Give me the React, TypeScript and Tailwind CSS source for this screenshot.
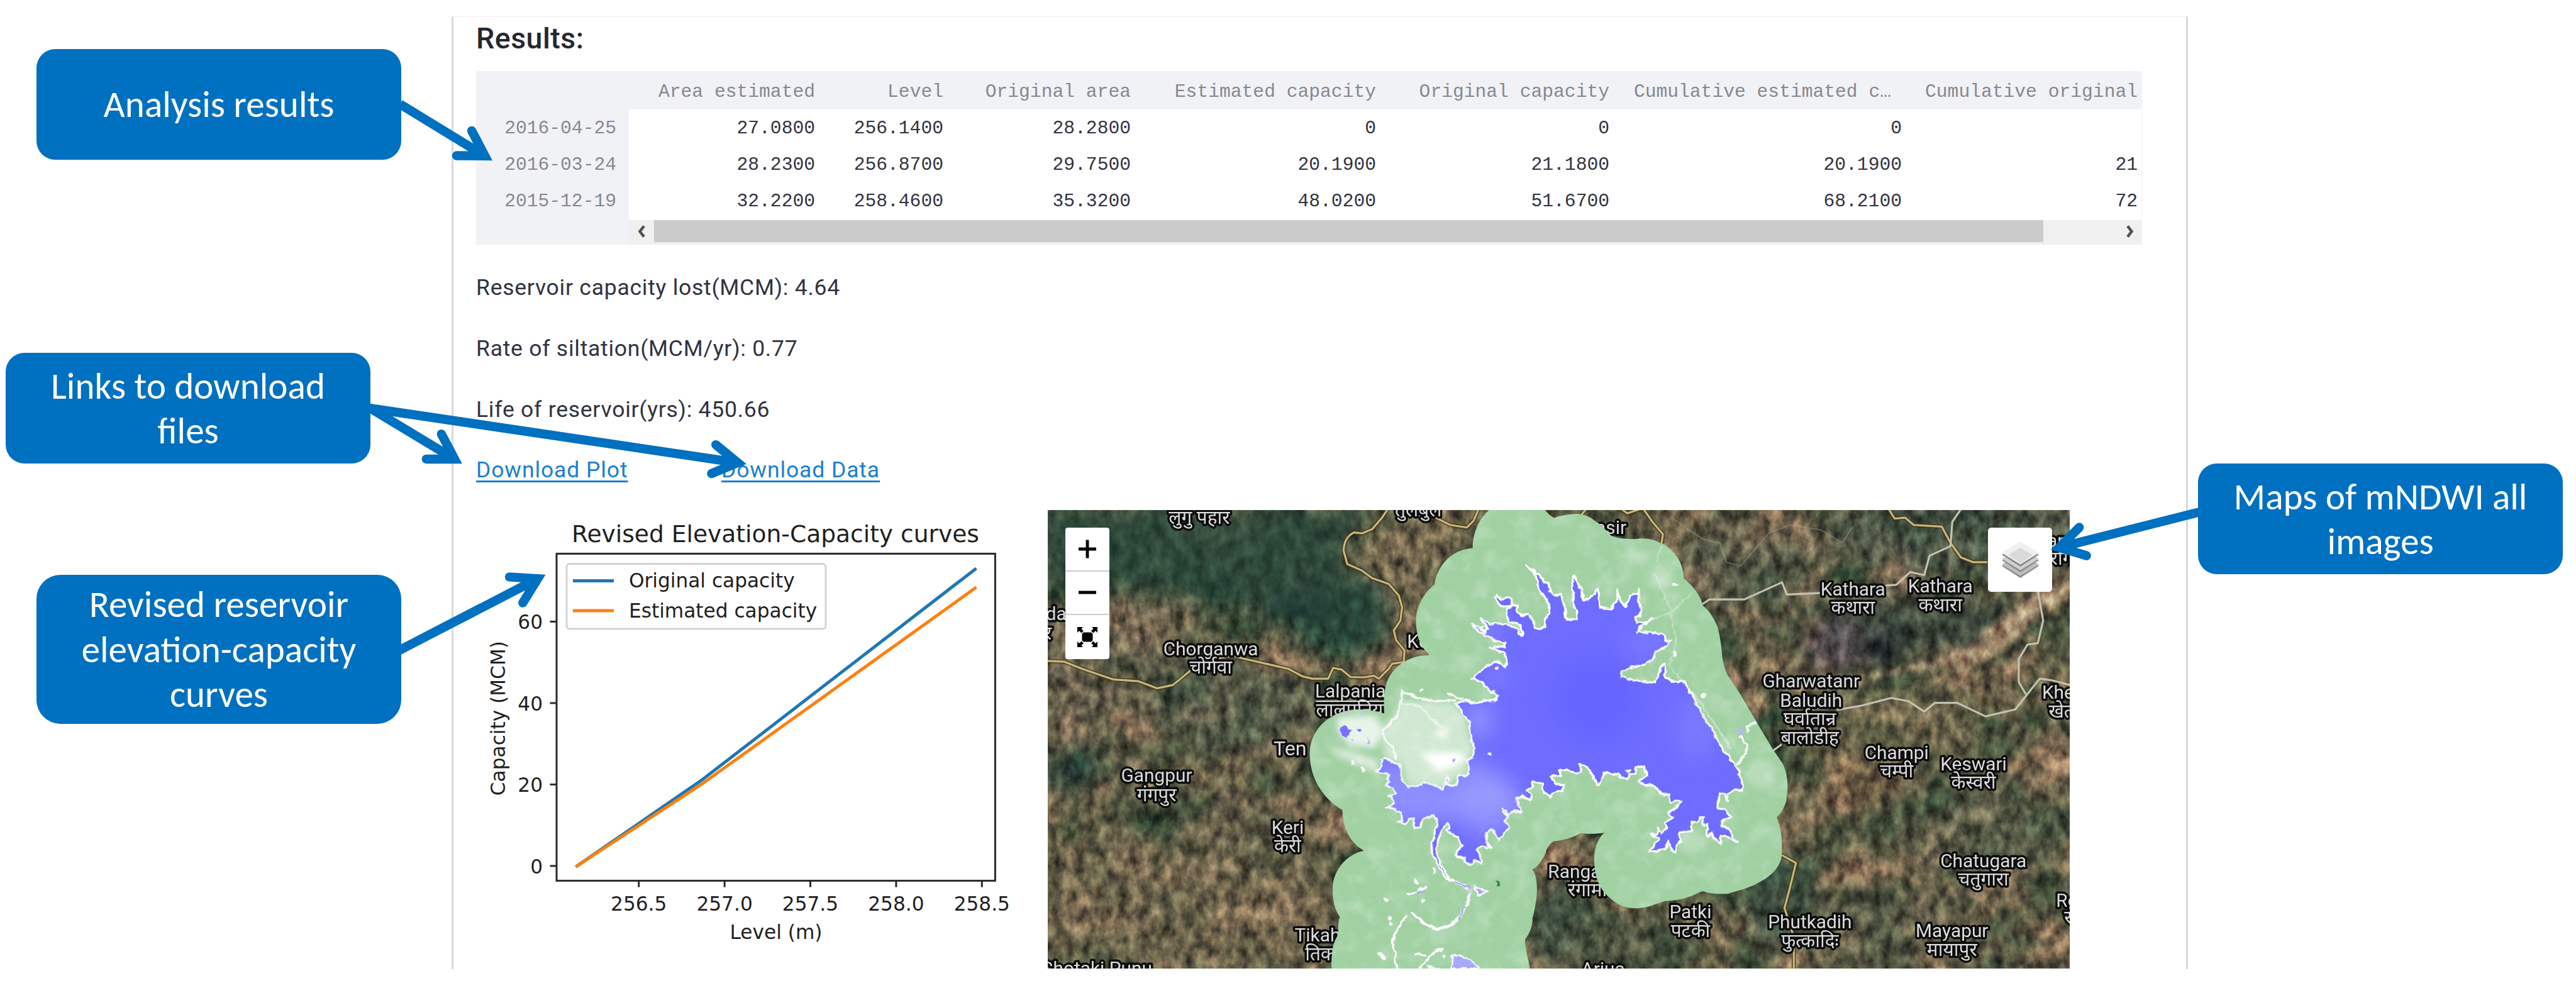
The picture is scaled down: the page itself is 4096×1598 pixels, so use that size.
import type { ReactNode } from "react";

const MONO = "font-['Liberation_Mono',monospace]";
const PLEX = "font-[Roboto,sans-serif]";

/* ---------- Results table ---------- */

const INDEX = ["2016-04-25", "2016-03-24", "2015-12-19"];

const COLUMNS = [
  { title: "Area estimated", cell: "w-[313px] pr-[17px]", values: ["27.0800", "28.2300", "32.2200"] },
  { title: "Level", cell: "w-[204px] pr-[17px]", values: ["256.1400", "256.8700", "258.4600"] },
  { title: "Original area", cell: "w-[298px] pr-[17px]", values: ["28.2800", "29.7500", "35.3200"] },
  { title: "Estimated capacity", cell: "w-[390px] pr-[17px]", values: ["0", "20.1900", "48.0200"] },
  { title: "Original capacity", cell: "w-[371px] pr-[17px]", values: ["0", "21.1800", "51.6700"] },
  { title: "Cumulative estimated c…", cell: "w-[465px] pr-[17px]", values: ["0", "20.1900", "68.2100"] },
  { title: "Cumulative original", cell: "w-[364px] pr-[6px]", values: ["", "21", "72"] },
];

function ResultsTable() {
  return (
    <div className={`mt-[24px] flex h-[276px] w-[2649px] bg-[#f0f2f6] text-[29.65px] leading-[58px] whitespace-pre ${MONO}`}>
      <div className="w-[243px] pt-[62px] pr-[20px] text-right text-[#87888f]">
        {INDEX.map((d) => (
          <div key={d} className="h-[58px]">{d}</div>
        ))}
      </div>
      <div className="flex w-[2406px] flex-col">
        <div className="flex grow">
          {COLUMNS.map((c) => (
            <div key={c.title} className="flex flex-col">
              <div className={`h-[61px] pt-[4px] text-right text-[#87888f] ${c.cell}`}>
                {c.title.endsWith("…") ? <span className="mr-[17px]">{c.title}</span> : c.title}
              </div>
              <div className={`grow bg-white pt-px text-right text-[#31333f] ${c.cell}`}>
                {c.values.map((v, i) => (
                  <div key={i} className="h-[58px]">{v}</div>
                ))}
              </div>
            </div>
          ))}
        </div>
        <div className="flex h-[39px] bg-[#f0f0f0]">
          <div className="flex h-[35px] w-[40px] items-center justify-center">
            <svg className="h-[20px] w-[12px]" viewBox="0 0 12 20"><path d="M10 1.5L3.5 10L10 18.5" fill="none" stroke="#505050" strokeWidth="4.5" /></svg>
          </div>
          <div className="h-[35px] w-[2209px] bg-[#cbcbcb]" />
          <div className="flex h-[35px] w-[157px] items-center justify-end pr-[13px]">
            <svg className="h-[20px] w-[12px]" viewBox="0 0 12 20"><path d="M2 1.5L8.5 10L2 18.5" fill="none" stroke="#505050" strokeWidth="4.5" /></svg>
          </div>
        </div>
      </div>
    </div>
  );
}

/* ---------- Elevation-capacity chart ---------- */

function Chart() {
  const px = (v: number) => 1015.7 + (v - 256.5) * 272.8;
  const py = (v: number) => 1378.3 - v * 6.475;
  const line = (pts: number[][]) => pts.map(([a, b]) => `${px(a)},${py(b)}`).join(" ");
  return (
    <svg className="h-[728px] w-[909px] shrink-0" viewBox="757 812.4 909 728" fontFamily="'DejaVu Sans', sans-serif" fontSize="31.2" fill="#1f1f1f">
      <text x="1233" y="863.5" textAnchor="middle" fontSize="37.6">Revised Elevation-Capacity curves</text>
      <polyline points={line([[256.14, 0], [256.87, 21.18], [258.46, 72.85]])} fill="none" stroke="#1f77b4" strokeWidth="5" strokeLinecap="square" />
      <polyline points={line([[256.14, 0], [256.87, 20.19], [258.46, 68.21]])} fill="none" stroke="#ff7f0e" strokeWidth="5" strokeLinecap="square" />
      <rect x="885" y="881.8" width="697.4" height="520" fill="none" stroke="#2b2b2b" strokeWidth="3" />
      {[0, 20, 40, 60].map((v) => (
        <g key={v}>
          <line x1="874.5" x2="885" y1={py(v)} y2={py(v)} stroke="#2b2b2b" strokeWidth="3" />
          <text x="863" y={py(v) + 12} textAnchor="end">{v}</text>
        </g>
      ))}
      {[256.5, 257, 257.5, 258, 258.5].map((v) => (
        <g key={v}>
          <line x1={px(v)} x2={px(v)} y1="1402" y2="1412" stroke="#2b2b2b" strokeWidth="3" />
          <text x={px(v)} y="1449.3" textAnchor="middle">{v.toFixed(1)}</text>
        </g>
      ))}
      <text x="1234" y="1494.5" textAnchor="middle">Level (m)</text>
      <text transform="translate(803.4 1143.5) rotate(-90)" textAnchor="middle">Capacity (MCM)</text>
      <rect x="901" y="898" width="412" height="103.5" rx="5" fill="#fff" stroke="#d3d3d3" strokeWidth="3" />
      <line x1="911" x2="976" y1="924.8" y2="924.8" stroke="#1f77b4" strokeWidth="5" />
      <line x1="911" x2="976" y1="972.3" y2="972.3" stroke="#ff7f0e" strokeWidth="5" />
      <text x="1000" y="935.5">Original capacity</text>
      <text x="1000" y="983.5">Estimated capacity</text>
    </svg>
  );
}

/* ---------- Map ---------- */

type Anchor = "start" | "middle" | "end";
const PLACES: [string, number, number, Anchor, number?][] = [
  ["लुगु पहार", -641, 98, "middle"],
  ["तुलबुल", 678, 52, "middle"],
  ["nda", -1440, 679, "end"],
  ["र", -1530, 796, "end"],
  ["Chorganwa", -572, 891, "middle"],
  ["चोर्गवा", -572, 1000, "middle"],
  ["Lalpania", 56, 1145, "start"],
  ["लालपनिया", 62, 1256, "start"],
  ["Ten", -194, 1491, "start", 122],
  ["Gangpur", -898, 1652, "middle"],
  ["गंगपुर", -898, 1769, "middle"],
  ["Keri", -109, 1964, "middle"],
  ["केरी", -109, 2076, "middle"],
  ["Tikahara", -67, 2614, "start"],
  ["तिकहारा", -4, 2726, "start"],
  ["Chotaki Punu", -925, 2812, "end"],
  ["Ko", 610, 845, "start"],
  ["asir", 1930, 158, "end"],
  ["Rangamati", 1458, 2230, "start"],
  ["रंगामाटी", 1578, 2340, "start"],
  ["Patki", 2316, 2472, "middle"],
  ["पटकी", 2316, 2585, "middle"],
  ["Arjua", 1790, 2815, "middle"],
  ["Kathara", 3294, 530, "middle"],
  ["कथारा", 3294, 640, "middle"],
  ["Kathara", 3820, 512, "middle"],
  ["कथारा", 3820, 625, "middle"],
  ["Gharwatanr", 3042, 1084, "middle"],
  ["Baludih", 3042, 1199, "middle"],
  ["घर्वातान्र", 3034, 1308, "middle"],
  ["बालोडीह", 3034, 1423, "middle"],
  ["Champi", 3557, 1514, "middle"],
  ["चम्पी", 3557, 1623, "middle"],
  ["Keswari", 4020, 1584, "middle"],
  ["केस्वरी", 4020, 1691, "middle"],
  ["Khetko", 4432, 1150, "start"],
  ["खेतको", 4472, 1263, "start"],
  ["Chatugara", 4079, 2166, "middle"],
  ["चतुगारा", 4079, 2275, "middle"],
  ["Phutkadih", 3035, 2532, "middle"],
  ["फुत्कादिः", 3035, 2645, "middle"],
  ["Mayapur", 3890, 2586, "middle"],
  ["मायापुर", 3890, 2699, "middle"],
  ["Ro", 4517, 2403, "start"],
  ["रो", 4566, 2508, "start"],
  ["Jarang", 4650, 240, "end"],
  ["जरंगि", 4620, 345, "end"],
];

const YELLOW_ROADS = [
  "M500 0L460 60L400 130L340 155L290 150Q230 180 228 260L250 340L340 380L400 425L500 460L560 530L580 600L570 680L530 740L545 800L595 860L590 930L520 940L500 970L440 1030L410 1012L350 1022L270 1020L215 975L165 965L135 1030L40 1030L-20 1016L-104 971L-231 942L-357 913L-441 893L-568 913L-694 981L-799 1068L-894 1088L-1010 1045L-1157 1035L-1346 971L-1452 928L-1560 923",
  "M780 60L870 105L970 120L1010 80L1045 0",
  "M1655 50L1695 0M1890 0L1935 35L2010 10M2030 5L2090 90L2150 160L2142 215",
  "M3510 10L3545 66L3608 61L3660 105L3829 115L3881 212L3944 300L4018 329L4102 329",
  "M2866 2092L2951 2139L2913 2295L2882 2411L2938 2586L2938 2775",
];
const WHITE_ROADS = [
  "M3944 10L3892 86L3881 232L3755 290L3723 407L3639 388L3555 465L3490 470M3100 514L2896 524L2867 450L2640 553L2430 553L2387 582",
  "M4407 500L4439 680L4407 816L4344 825L4292 913L4292 1049L4334 1123M3197 1218L3334 1195L3524 1146L3629 1166L3723 1228L3787 1176L3923 1176L4092 1257L4271 1215L4418 1030L4492 1040L4600 1068",
  "M2810 1466L2865 1425",
];

const BUFFER =
  "M1110 10C1050 60 1005 140 1005 245C880 250 790 350 775 465C700 520 655 620 665 710C668 790 700 850 740 880L740 890C600 890 500 980 480 1080C468 1130 470 1190 472 1240C430 1222 370 1215 300 1215C150 1225 30 1330 24 1470C20 1620 100 1750 220 1820C225 1940 270 2020 350 2065C240 2090 160 2190 162 2300C162 2370 175 2420 205 2465C190 2500 200 2560 190 2580C165 2620 155 2660 155 2780L1350 2780C1340 2710 1320 2660 1320 2600C1350 2560 1365 2520 1365 2470C1385 2400 1392 2340 1392 2290C1390 2230 1380 2200 1365 2180C1410 2150 1440 2100 1450 2060C1465 2030 1480 2015 1495 2008C1550 2005 1610 1985 1655 1960C1700 1966 1760 1964 1797 1958C1750 2000 1737 2060 1737 2120C1737 2210 1760 2290 1830 2350C1890 2400 1930 2412 1990 2412C2060 2410 2110 2385 2160 2370C2220 2365 2260 2360 2300 2345C2340 2335 2370 2310 2395 2310C2430 2325 2490 2327 2540 2325C2590 2310 2680 2290 2740 2250C2820 2210 2865 2140 2865 2090C2870 2000 2865 1940 2835 1865C2870 1830 2895 1780 2895 1740C2905 1680 2902 1600 2870 1540C2850 1510 2830 1480 2815 1460L2710 1285L2620 1130L2540 1010C2520 970 2510 930 2505 880C2500 810 2490 760 2480 720C2460 670 2430 620 2390 590C2380 540 2350 490 2275 425C2275 370 2250 310 2230 290C2200 250 2170 225 2140 215C2090 190 2050 180 1980 190C1930 185 1890 190 1840 170C1810 140 1780 100 1740 80C1710 55 1670 38 1630 38C1580 40 1530 50 1495 62C1470 50 1455 30 1435 10Z";

const LAKE =
  "M1330 345L1385 390L1410 410L1440 450L1465 460L1470 500L1500 530L1535 515L1550 570L1560 600L1570 670L1635 675L1630 620L1612 600L1605 480L1610 405L1635 450L1662 490L1670 555L1705 555L1730 520L1758 485L1765 550L1772 600L1840 608L1870 565L1878 495L1890 560L1930 595L1945 545L1965 515L1995 520L2012 490L2000 560L2015 600L2015 650L1985 660L1988 690L2040 690L2090 670L2025 710L1995 748L2070 750L2155 762L2162 800L2200 800L2155 850L2110 860L2100 900L2040 945L1960 965L1900 990L1895 1015L1940 1030L2020 1045L2105 1050L2120 1020L2130 970L2165 940L2160 1020L2220 1050L2268 1042L2330 1130L2400 1270L2450 1340L2510 1455L2580 1540L2605 1590L2630 1650L2628 1700L2580 1702L2545 1720L2535 1765L2523 1720L2485 1725L2490 1760L2475 1780L2485 1815L2525 1820L2565 1860L2505 1890L2510 1920L2545 1935L2570 1980L2600 2015L2530 1980L2495 1980L2500 2025L2460 1990L2440 1960L2415 1980L2420 1910L2390 1910L2395 1865L2375 1865L2360 1890L2330 1890L2320 1950L2275 1945L2245 1960L2255 2000L2230 2040L2225 2080L2200 2060L2185 2010L2160 2055L2065 2075L2130 1990L2080 1970L2115 1965L2120 1930L2140 1960L2175 1925L2155 1895L2210 1870L2180 1835L2215 1820L2260 1770L2240 1760L2190 1780L2185 1730L2150 1730L2120 1700L2080 1670L2040 1670L2000 1645L2055 1615L2035 1555L1985 1560L1990 1600L1945 1610L1940 1635L1905 1630L1880 1605L1790 1600L1770 1670L1750 1665L1715 1595L1685 1550L1650 1548L1655 1585L1630 1602L1580 1580L1530 1585L1535 1615L1475 1618L1500 1660L1550 1670L1545 1705L1490 1720L1475 1740L1435 1720L1420 1690L1430 1660L1370 1650L1355 1690L1330 1700L1360 1730L1350 1760L1300 1735L1270 1750L1275 1800L1300 1835L1260 1830L1220 1845L1185 1815L1185 1835L1220 1860L1200 1890L1225 1930L1190 1960L1165 2000L1145 1975L1118 1930L1090 1960L1085 2010L1115 2055L1060 2040L1030 2060L1050 2100L1060 2140L1020 2125L1000 2145L960 2140L955 2105L905 2100L910 2065L940 2035L915 1990L850 1945L865 1930L850 1900L825 1930L800 1990L785 2050L790 2100L820 2160L865 2235L840 2225L795 2150L768 2105L755 2040L780 1950L795 1880L770 1855L740 1860L700 1885L690 1925L655 1928L650 1870L620 1875L600 1910L555 1885L580 1880L575 1840L530 1810L485 1808L530 1780L520 1740L500 1735L545 1720L520 1690L485 1675L500 1645L490 1620L505 1610L430 1590L460 1550L455 1520L485 1505L520 1535L560 1540L575 1580L580 1640L620 1680L690 1675L710 1650L770 1670L820 1695L850 1625L865 1635L845 1670L910 1670L920 1615L970 1610L985 1580L970 1520L1005 1500L1015 1450L1000 1410L990 1350L985 1290L950 1250L940 1220L895 1180L960 1160L1030 1180L1080 1160L1135 1160L1158 1135L1140 1105L1110 1110L1060 1050L1000 1030L1045 990L1100 950L1130 930L1160 930L1200 960L1212 940L1200 880L1110 840L1195 835L1200 815L1130 800L1080 770L1040 745L1000 700L1035 715L1080 755L1095 730L1050 665L1100 695L1200 700L1240 720L1275 725L1285 760L1305 770L1290 710L1270 695L1225 690L1215 650L1215 610L1240 590L1215 595L1180 595L1160 580L1140 545L1155 530L1175 555L1200 550L1215 535L1240 560L1240 580L1275 590L1270 620L1300 650L1340 640L1370 680L1375 720L1410 735L1440 715L1440 670L1470 635L1465 590L1440 540L1400 480L1385 410Z";

function SatelliteMap() {
  return (
    <div className="relative h-[728.5px] w-[1625px] shrink-0 overflow-hidden">
      <svg className="block h-full w-full" viewBox="-1553 15 6152 2758" preserveAspectRatio="none">
        <defs>
          <filter id="terrain" x="0" y="0" width="1" height="1" colorInterpolationFilters="sRGB">
            <feTurbulence type="fractalNoise" baseFrequency="0.003 0.0035" numOctaves="6" seed="14" />
            <feColorMatrix values="0 0.62 0 0 0.055  0 0.3 0 0 0.2  0 0.26 0 0 0.135  0 0 0 0 1" />
          </filter>
          <filter id="grain" x="0" y="0" width="1" height="1" colorInterpolationFilters="sRGB">
            <feTurbulence type="fractalNoise" baseFrequency="0.015 0.01" numOctaves="4" seed="5" />
            <feColorMatrix values="1.3 0 0 0 -0.13  1.25 0.05 0 0 -0.13  1.2 0.08 0 0 -0.12  0 0 0 0 1" />
          </filter>
          <filter id="mottle" x="0" y="0" width="1" height="1" colorInterpolationFilters="sRGB">
            <feTurbulence type="fractalNoise" baseFrequency="0.008" numOctaves="5" seed="9" />
            <feColorMatrix values="0 0 0 0 1  0 0 0 0 1  0 0 0 0 1  2 0 0 0 -0.9" />
          </filter>
          <filter id="ragged" x="-0.1" y="-0.1" width="1.2" height="1.2">
            <feTurbulence type="fractalNoise" baseFrequency="0.03" numOctaves="2" seed="3" />
            <feDisplacementMap in="SourceGraphic" scale="26" xChannelSelector="R" yChannelSelector="G" />
          </filter>
          <filter id="soft60" x="-0.5" y="-0.5" width="2" height="2" colorInterpolationFilters="sRGB"><feGaussianBlur stdDeviation="60" /></filter>
          <filter id="soft25" x="-0.5" y="-0.5" width="2" height="2" colorInterpolationFilters="sRGB"><feGaussianBlur stdDeviation="20" /></filter>
          <clipPath id="bufferClip"><path d={BUFFER} /></clipPath>
          <clipPath id="lakeClip"><path d={LAKE} /></clipPath>
        </defs>

        <rect x="-1553" y="15" width="6152" height="2758" fill="#55523f" />
        <rect x="-1553" y="15" width="6152" height="2758" filter="url(#terrain)" />
        <g filter="url(#soft60)">
          <path d="M-1600 0L420 0L300 150L200 300L480 500L520 800L300 900L-300 640L-900 520L-1600 520Z" fill="#274435" opacity="0.75" />
          <path d="M-300 560L420 480L480 850L0 850Z" fill="#29473a" opacity="0.7" />
          <path d="M560 60L960 60L980 240L740 480L620 800L560 500L260 300L300 180Z" fill="#75684f" opacity="0.75" />
          <path d="M-1560 620L-800 560L-600 860L-1200 1350L-1560 1400Z" fill="#6e6350" opacity="0.55" />
          <ellipse cx="-450" cy="1200" rx="500" ry="260" fill="#3e4f40" opacity="0.55" />
          <ellipse cx="-1450" cy="1600" rx="200" ry="60" fill="#1b3634" opacity="0.9" />
          <ellipse cx="-1330" cy="1500" rx="130" ry="35" fill="#1f3a38" opacity="0.8" />
          <path d="M-1560 2100L-200 1900L200 2100L150 2780L-1560 2780Z" fill="#73664f" opacity="0.6" />
          <ellipse cx="-400" cy="1900" rx="350" ry="220" fill="#4c4f3f" opacity="0.4" />
          <ellipse cx="1900" cy="2600" rx="500" ry="200" fill="#46523f" opacity="0.5" />
          <ellipse cx="1500" cy="2500" rx="160" ry="260" fill="#33463a" opacity="0.7" />
          <ellipse cx="2850" cy="2350" rx="220" ry="300" fill="#304639" opacity="0.8" />
          <ellipse cx="2650" cy="330" rx="420" ry="260" fill="#55574a" opacity="0.5" />
          <ellipse cx="3900" cy="150" rx="800" ry="220" fill="#3c4d42" opacity="0.6" />
          <ellipse cx="3700" cy="700" rx="620" ry="170" fill="#354238" opacity="0.85" />
          <ellipse cx="3200" cy="830" rx="190" ry="170" fill="#4c474d" opacity="0.9" />
          <ellipse cx="3480" cy="840" rx="120" ry="90" fill="#23282e" opacity="0.9" />
          <ellipse cx="3520" cy="1350" rx="600" ry="260" fill="#626048" opacity="0.6" />
          <ellipse cx="3350" cy="1650" rx="220" ry="160" fill="#745a42" opacity="0.6" />
          <ellipse cx="4100" cy="1950" rx="520" ry="260" fill="#4e5645" opacity="0.6" />
          <ellipse cx="3500" cy="2500" rx="500" ry="200" fill="#5f5c4a" opacity="0.5" />
        </g>
        <g filter="url(#soft25)">
          <path d="M2760 1050L2830 1020L3000 1060L3220 1050L3540 965L3700 940L3960 850L4220 640L4400 500L4600 480L4600 560L4440 620L4250 820L4100 930L3800 960L3500 1010L3200 1080L2950 1110Z" fill="#a0866a" opacity="0.95" />
          <path d="M2700 1100L2780 1180L2770 1250L2700 1270L2640 1180Z" fill="#94795c" opacity="0.9" />
          <path d="M2980 1000L3200 960L3500 960L3800 900L4100 780" fill="none" stroke="#30302a" strokeWidth="26" opacity="0.7" />
        </g>
        <rect x="-1553" y="15" width="6152" height="2758" filter="url(#grain)" className="opacity-70 mix-blend-overlay" />
        <g filter="url(#soft60)">
          <path d="M-1600 0L420 0L300 150L200 300L480 500L500 780L300 850L-200 600L-900 480L-1600 450Z" fill="#27453a" opacity="0.5" />
          <ellipse cx="-30" cy="590" rx="210" ry="40" fill="#132f33" opacity="0.8" />
        </g>

        <g fill="none" strokeLinejoin="round">
          <path d="M2200 60L2390 190L2492 212L2534 330L2619 350L2787 154L2913 105L3103 135L3229 212L3292 115" stroke="#a5a48f" strokeWidth="9" opacity="0.4" />
          {YELLOW_ROADS.map((d) => <path key={d} d={d} stroke="#43370f" strokeWidth="24" opacity="0.85" />)}
          {YELLOW_ROADS.map((d) => <path key={d} d={d} stroke="#c8b684" strokeWidth="12" />)}
          {WHITE_ROADS.map((d) => <path key={d} d={d} stroke="#c4c2b0" strokeWidth="12" />)}
        </g>

        <g fontFamily="Roboto, 'Noto Sans Devanagari', 'Noto Sans', sans-serif" fill="#dcdcdc" stroke="#0c0c0c" strokeWidth="26" strokeLinejoin="round" className="[paint-order:stroke]">
          {PLACES.map(([name, x, y, anchor, size]) => (
            <text key={name + x} x={x} y={y} textAnchor={anchor} fontSize={size ?? 113}>{name}</text>
          ))}
          <path d="M62 1166H480" stroke="#dcdcdc" strokeWidth="8" />
        </g>

        <path d={BUFFER} fill="#a1d1a3" />
        <g clipPath="url(#bufferClip)">
          <rect x="0" y="0" width="2950" height="2780" filter="url(#mottle)" opacity="0.3" />
          <g filter="url(#soft25)" fill="#ffffff">
            <path d="M570 1160L900 1180L960 1260L1000 1460L960 1600L820 1690L620 1680L570 1540L470 1500L460 1340L550 1250Z" opacity="0.5" />
            <path d="M190 1260L420 1250L470 1340L420 1450L250 1420L190 1340Z" opacity="0.75" />
            <path d="M680 1480L900 1470L980 1500L900 1560L800 1590Z" />
            <path d="M760 1370L860 1310L840 1380Z" />
            <path d="M120 1430L440 1520L430 1590L200 1500Z" opacity="0.6" />
            <ellipse cx="2140" cy="420" rx="70" ry="70" opacity="0.3" />
            <ellipse cx="2010" cy="300" rx="60" ry="40" opacity="0.3" />
            <ellipse cx="2740" cy="1600" rx="90" ry="90" opacity="0.25" />
            <ellipse cx="2320" cy="2010" rx="80" ry="70" opacity="0.25" />
          </g>
          <g fill="none" stroke="#ffffff" strokeLinejoin="round" strokeLinecap="round" filter="url(#ragged)">
            <path d="M580 1105L565 1200L545 1260L465 1340L470 1390L520 1440L540 1510" strokeWidth="13" opacity="0.8" />
            <path d="M580 1105L640 1130L700 1155L800 1165L900 1160M860 1125L940 1150" strokeWidth="12" />
            <path d="M580 1180L700 1200L750 1270L820 1320" strokeWidth="12" opacity="0.5" />
            <path d="M2270 1050L2190 950L2230 800L2200 640M2200 630L2320 520M2200 630L2090 670M2100 400L2200 620M2110 330L2140 230" strokeWidth="8" opacity="0.35" />
            <path d="M2275 1045L2400 1210L2480 1330L2560 1450" strokeWidth="12" opacity="0.4" />
            <path d="M2710 1290L2660 1320L2660 1350M2620 1380L2660 1440L2640 1490L2600 1540" strokeWidth="15" opacity="0.85" />
            <path d="M2615 1330L2620 1360" stroke="#b9b5fa" strokeWidth="22" />
            <path d="M865 2240L900 2255L960 2275L985 2310L975 2380L930 2460L880 2510L790 2540L720 2510L670 2470L640 2440" strokeWidth="17" />
            <path d="M900 2255L975 2280L985 2320M960 2400L920 2480" stroke="#9a98f2" strokeWidth="8" />
            <path d="M605 2460L560 2520L530 2580L525 2650L545 2690L535 2740L550 2775M690 2770L740 2710L770 2675L820 2660M660 2690L720 2695" strokeWidth="13" />
            <path d="M610 2325L660 2320L725 2285M655 2235L670 2265M770 2170L775 2200" strokeWidth="13" />
            <path d="M670 2320L710 2305" stroke="#a5a2f4" strokeWidth="12" />
            <path d="M485 2360h4M705 2367h4M505 2470v6M510 2505h3M440 2690L470 2710M695 1097h3M280 1530v10M340 1565l8 20M830 2700v6M2215 465h14M2218 870v14M2390 1130h10" strokeWidth="20" />
          </g>
          <g filter="url(#ragged)" stroke="#ffffff" strokeWidth="9" fill="#7672fb">
            <path d="M200 1330L235 1310L280 1345L240 1390L215 1370Z" strokeWidth="4" />
            <path d="M305 1330L335 1330L335 1355L315 1350Z" strokeWidth="4" />
            <path d="M375 1370L382 1430L370 1420ZM270 1395L300 1405L275 1405Z" strokeWidth="2" fill="#9f9cf3" />
            <path d="M885 1505L905 1510L885 1540Z" strokeWidth="2" fill="#a5a2f4" />
            <path d="M225 1240L255 1240M325 1245L340 1252" stroke="#c9c6f8" strokeWidth="14" />
            <path d="M1018 2285L1095 2310L1035 2335Z" fill="#a4a2f6" />
            <path d="M880 2695L940 2700L990 2720L1050 2775L880 2775Z" fill="#a9a8fb" />
            <path d="M740 2765L790 2775L760 2790Z" fill="#a9a8fb" />
          </g>
          <path d="M1142 2245L1165 2250L1170 2278L1150 2280L1155 2262Z" fill="#1d8a34" />
        </g>

        <g filter="url(#ragged)">
          <path d={LAKE} fill="#6e6dff" stroke="#ffffff" strokeWidth="11" strokeLinejoin="round" />
          <g clipPath="url(#lakeClip)">
            <g filter="url(#soft60)">
              <path d="M400 1480L860 1660L1000 1500L1250 1650L1320 1850L1100 2000L880 1880L500 1900Z" fill="#8f8fff" />
              <ellipse cx="1080" cy="1740" rx="170" ry="70" fill="#a3a3ff" opacity="0.65" />
              <ellipse cx="1040" cy="1280" rx="90" ry="110" fill="#9090ff" />
              <ellipse cx="1080" cy="730" rx="110" ry="60" fill="#8585ff" />
              <ellipse cx="1150" cy="1020" rx="80" ry="50" fill="#8383ff" />
              <ellipse cx="2350" cy="1330" rx="130" ry="200" fill="#7a78ff" />
              <ellipse cx="2050" cy="820" rx="130" ry="70" fill="#7c7aff" />
              <ellipse cx="1750" cy="1150" rx="250" ry="260" fill="#6665ff" />
              <ellipse cx="1000" cy="2090" rx="70" ry="50" fill="#7270ff" />
            </g>
            <path d={LAKE} fill="none" stroke="#ffffff" strokeWidth="11" strokeLinejoin="round" />
          </g>
          <path d="M1150 968h3M1106 1480h5" stroke="#ffffff" strokeWidth="18" strokeLinecap="round" />
          <path d="M1055 715L1080 710L1090 745L1065 740Z" fill="#a4d4a6" stroke="#fff" strokeWidth="9" />
          <path d="M1930 1583L1955 1585L1940 1598Z" fill="#a4d4a6" stroke="#fff" strokeWidth="9" />
        </g>
      </svg>

      <div className="absolute top-[28px] left-[28px] flex w-[70px] flex-col divide-y-[2px] divide-[#cccccc] overflow-hidden rounded-[4px] bg-white">
        <MapButton><path d="M16 1.5V30.5M2 16H30" stroke="#000" strokeWidth="4.8" /></MapButton>
        <MapButton><path d="M2 16H30" stroke="#000" strokeWidth="4.8" /></MapButton>
        <MapButton>
          <rect x="7.5" y="8.5" width="17" height="15" rx="4" fill="#000" />
          <path d="M0 0H9L6.5 2.8L10 6.3L6.5 9.5L3 6L0 9ZM32 0V9L29 6L25.5 9.5L22 6.3L25.5 2.8L23 0ZM0 32V23L3 26L6.5 22.5L10 25.7L6.5 29.2L9 32ZM32 32H23L25.5 29.2L22 25.7L25.5 22.5L29 26L32 23Z" fill="#000" />
        </MapButton>
      </div>

      <div className="absolute top-[28px] right-[28px] flex h-[102px] w-[102px] items-center justify-center rounded-[5px] bg-white">
        <svg className="h-[58px] w-[61px]" viewBox="0 0 61 58">
          <path d="M30.5 22L60 39L30.5 58L1 39Z" fill="#8f8f8f" />
          <path d="M30.5 19L60 36.5L30.5 54.5L1 36.5Z" fill="#bdbdbd" />
          <path d="M30.5 13L60 30L30.5 49L1 30Z" fill="#8f8f8f" />
          <path d="M30.5 10L60 27.5L30.5 45.5L1 27.5Z" fill="#d0d0d0" />
          <path d="M30.5 3.5L60 21L30.5 40L1 21Z" fill="#8a8a8a" />
          <path d="M30.5 0L60 18L30.5 36.5L1 18Z" fill="#f0f0f0" />
          <path d="M30.5 10L50 21.5L30.5 35L11 21.5Z" fill="#dadada" />
        </svg>
      </div>
    </div>
  );
}

function MapButton({ children }: { children: ReactNode }) {
  return (
    <div className="flex h-[69.5px] items-center justify-center">
      <svg className="h-[32px] w-[32px]" viewBox="0 0 32 32" fill="none">{children}</svg>
    </div>
  );
}

/* ---------- Annotations ---------- */

function Callout({ place, children }: { place: string; children: ReactNode }) {
  return (
    <div className={`absolute flex items-center justify-center bg-[#0070c0] text-center font-[Carlito,Lato,sans-serif] text-[59.2px] leading-[71.5px] whitespace-nowrap text-white ${place}`}>
      <div>{children}</div>
    </div>
  );
}

function Arrow({ from, to }: { from: [number, number]; to: [number, number] }) {
  const a = Math.atan2(to[1] - from[1], to[0] - from[0]);
  const spread = (31 * Math.PI) / 180;
  const tip = 7 / Math.sin(spread);
  const vx = to[0] - Math.cos(a) * tip;
  const vy = to[1] - Math.sin(a) * tip;
  const wing = (s: number) => `${vx - Math.cos(a + s * spread) * 45},${vy - Math.sin(a + s * spread) * 45}`;
  return (
    <g fill="none" stroke="#0070c0" strokeWidth="14.5">
      <line x1={from[0]} y1={from[1]} x2={vx} y2={vy} />
      <polyline points={`${wing(1)} ${vx},${vy} ${wing(-1)}`} strokeLinecap="round" strokeMiterlimit="6" />
    </g>
  );
}

export default function App() {
  return (
    <div className="relative h-[1598px] w-[4096px] overflow-hidden bg-white">
      <div className="flex justify-start pt-[26px] pl-[718px]">
        <main className={`h-[1515px] w-[2761px] border-x-[3px] border-t border-x-[#d8d9de] border-t-[#f4eef0] pt-[6px] pl-[36px] text-[#31333f] ${PLEX}`}>
          <h3 className="text-[46.5px] leading-[56px] font-medium tracking-[0.5px] text-[#262730]">Results:</h3>
          <ResultsTable />
          <div className="mt-[41px] flex flex-col gap-[43px] text-[35.5px] leading-[54px] tracking-[0.75px]">
            <p>Reservoir capacity lost(MCM): 4.64</p>
            <p>Rate of siltation(MCM/yr): 0.77</p>
            <p>Life of reservoir(yrs): 450.66</p>
            <div className="-mt-px flex tracking-[0.9px] text-[#1c7fd0] underline decoration-[3px] underline-offset-[5px]">
              <div className="w-[390px]"><a>Download Plot</a></div>
              <a>Download Data</a>
            </div>
          </div>
          <div className="mt-[37px] flex items-start">
            <Chart />
            <SatelliteMap />
          </div>
        </main>
      </div>

      <svg className="absolute inset-0 h-full w-full" viewBox="0 0 4096 1598">
        <Arrow from={[636, 165.5]} to={[782.6, 255]} />
        <Arrow from={[587, 648]} to={[734.5, 737]} />
        <Arrow from={[587, 649]} to={[1186.4, 737.7]} />
        <Arrow from={[635, 1034]} to={[867, 914]} />
        <Arrow from={[3498, 814]} to={[3261.3, 873.8]} />
      </svg>

      <Callout place="left-[58px] top-[78px] h-[176px] w-[580px] rounded-[30px] pt-[2px]">Analysis results</Callout>
      <Callout place="left-[9px] top-[561px] h-[176px] w-[580px] rounded-[30px] pt-[2px]">Links to download<br />files</Callout>
      <Callout place="left-[58px] top-[914px] h-[237px] w-[580px] rounded-[38px] pt-[2px]">Revised reservoir<br />elevation-capacity<br />curves</Callout>
      <Callout place="left-[3495px] top-[737px] h-[176px] w-[580px] rounded-[30px] pt-[2px]">Maps of mNDWI all<br />images</Callout>
    </div>
  );
}
